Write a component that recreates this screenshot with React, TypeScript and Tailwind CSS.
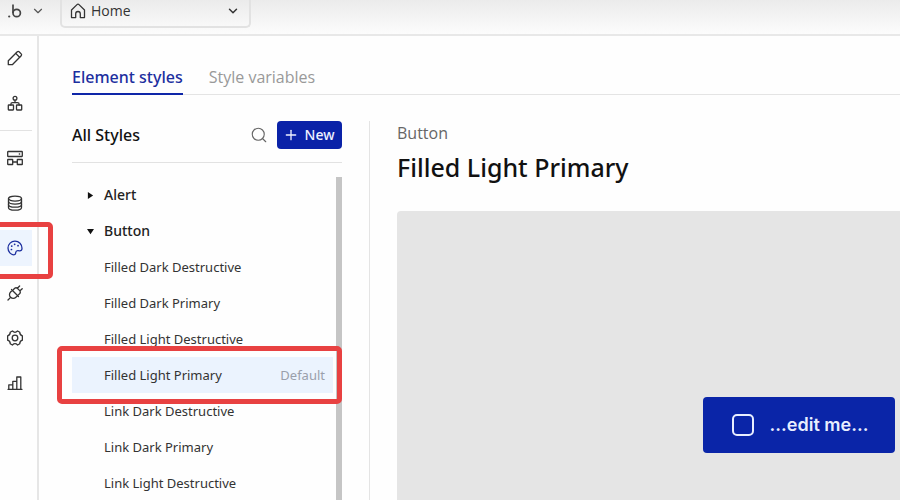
import type { ReactNode } from 'react';
import { ChevronDown, Plus, Search } from 'lucide-react';

function Icon({ children, className = '' }: { children: ReactNode; className?: string }) {
  return (
    <svg
      viewBox="0 0 16 16"
      className={`size-4 shrink-0 ${className}`}
      fill="none"
      stroke="currentColor"
      strokeWidth="1.3"
      strokeLinecap="round"
      strokeLinejoin="round"
      aria-hidden="true"
    >
      {children}
    </svg>
  );
}

type NavItem = { label: string; icon: ReactNode; active?: boolean };

const topNav: NavItem[] = [
  {
    label: 'Design',
    icon: (
      <>
        <path d="M1.3 14.7V10.7L10.3 1.8a1.3 1.3 0 0 1 1.8 0l2.1 2.1a1.3 1.3 0 0 1 0 1.8L5.3 14.7Z" />
        <path d="m8.7 3.4 3.9 3.9" />
      </>
    ),
  },
  {
    label: 'Workflow',
    icon: (
      <>
        <circle cx="8" cy="3.2" r="1.9" />
        <path d="M8 5.100v2.500M3.800 10V9.400Q3.800 7.600 5.600 7.600h4.800q1.800 0 1.800 1.800v.6" />
        <rect x="1.3" y="10" width="5.2" height="5" rx="0.5" />
        <rect x="9.5" y="10" width="5.2" height="5" rx="0.5" />
      </>
    ),
  },
];

const bottomNav: NavItem[] = [
  {
    label: 'Views',
    icon: (
      <>
        <rect x="0.7" y="1.5" width="14.6" height="5" rx="0.4" />
        <path d="M12.3 4h.4" />
        <rect x="0.7" y="9.5" width="5" height="5" rx="0.3" />
        <rect x="10.3" y="9.5" width="5" height="5" rx="0.3" />
        <path d="M5.700 12h4.600" />
      </>
    ),
  },
  {
    label: 'Data',
    icon: (
      <>
        <ellipse cx="8" cy="3.600" rx="6.500" ry="2.500" />
        <path d="M1.500 3.600v8.900c0 1.500 2.900 2.700 6.500 2.700s6.500-1.200 6.500-2.700V3.600" />
        <path d="M1.500 6.600c0 1.500 2.900 2.600 6.500 2.600s6.500-1.100 6.500-2.600M1.500 9.500c0 1.500 2.900 2.700 6.500 2.700s6.500-1.200 6.500-2.700" />
      </>
    ),
  },
  {
    label: 'Styles',
    active: true,
    icon: (
      <>
        <path d="M8 1.200a6.900 6.900 0 0 0-7 6.800c0 3.900 3 6.800 5.700 6.800 1.500 0 1.900-1 2-2.100.2-1.500 1-2.100 2.300-2l1.600.2c1.500.1 2.400-.8 2.400-2.600C15 4.400 12 1.200 8 1.200Z" />
        <path d="M7.600 4.300h.1M11 5.700h.1M4.700 6.100h.1M4.400 9.500h.1" strokeWidth="1.700" />
      </>
    ),
  },
  {
    label: 'Plugins',
    icon: (
      <>
        <path d="m4.500 4.500 7 7M5.300 5.300 3.600 7a3.700 3.700 0 0 0 0 5.300 3.700 3.700 0 0 0 5.300 0l1.700-1.700" />
        <path d="M3.600 12.400 1 15M6.300 4.700l1.400-1.400q1.500-1.100 2.900.2l2.100 2.100q1.200 1.400.1 2.900l-1.400 1.400M10.400 3.300 12.600 1M13 5.800l2.200-2.100" />
      </>
    ),
  },
  {
    label: 'Settings',
    icon: (
      <>
        <path d="M5.400 1q1.400 1.300 2.600 1.300T10.600 1l2.200 1.300q-.2 2.600 2.600 3.500v4.400q-2.800.9-2.600 3.500L10.600 15q-1.400-1.300-2.600-1.300T5.400 15l-2.200-1.300Q3.400 11.100.6 10.200V5.800Q3.400 4.900 3.200 2.300Z" />
        <circle cx="8" cy="8" r="2.800" />
      </>
    ),
  },
  {
    label: 'Logs',
    icon: (
      <>
        <path d="M1 14.300h14" />
        <path d="M1.800 14.300V9.800h4v4.500M5.800 14.300V6.300h4v8M9.800 14.300V2h4v12.300" />
      </>
    ),
  },
];

function NavButton({ item }: { item: NavItem }) {
  return (
    <button
      type="button"
      aria-label={item.label}
      className={`relative flex h-9 w-8 items-center pl-[7px] ${
        item.active ? 'bg-[#edf4fe] text-[#1c2f9f]' : 'text-[#333]'
      }`}
    >
      <Icon>{item.icon}</Icon>
      {item.active && (
        <span className="pointer-events-none absolute -top-2 -right-[21px] -bottom-[13px] -left-2 z-10 rounded-[5px] border-5 border-[#e84141]" />
      )}
    </button>
  );
}

const buttonStyles = [
  'Filled Dark Destructive',
  'Filled Dark Primary',
  'Filled Light Destructive',
  'Filled Light Primary',
  'Link Dark Destructive',
  'Link Dark Primary',
  'Link Light Destructive',
];

function StyleRow({ name, selected }: { name: string; selected: boolean }) {
  return (
    <li className={selected ? 'relative bg-[#ebf3fe]' : ''}>
      <button type="button" className="flex h-9 w-full items-center justify-between pr-2 pl-8">
        <span>{name}</span>
        {selected && <span className="text-[#9a9fab]">Default</span>}
      </button>
      {selected && (
        <span className="pointer-events-none absolute -inset-y-[11px] -right-[9px] -left-[15px] z-10 rounded-[5px] border-5 border-[#e84141]" />
      )}
    </li>
  );
}

export default function App() {
  return (
    <div className="flex h-screen flex-col overflow-hidden bg-[#fefefe] font-['Noto_Sans','Open_Sans',sans-serif] text-[#333]">
      <header className="flex h-9 shrink-0 items-start border-b-2 border-[#e8e8e8] bg-linear-to-b from-[#ebebeb] to-[#fcfcfc]">
        <button type="button" aria-label="Bubble menu" className="flex h-[22px] w-[60px] items-center gap-[9px] pl-2">
          <svg viewBox="0 0 14 14" className="size-3.5" fill="none" stroke="#444" strokeWidth="1.700" aria-hidden="true">
            <circle cx="8.700" cy="9" r="3.700" />
            <path d="M5 .5V9" />
            <circle cx="1.200" cy="12.500" r="1.100" fill="#444" stroke="none" />
          </svg>
          <ChevronDown className="size-3.5 text-[#555]" strokeWidth={2} />
        </button>
        <label className="relative flex h-7 w-[191px] items-start rounded-b-[5px] border-2 border-t-0 border-[#e2e2e2]">
          <Icon className="pointer-events-none absolute top-[3px] left-2">
            <path d="M1.500 14.600V7L7 1.600a1.400 1.400 0 0 1 2 0L14.500 7v7.600h-4.200v-3.800a2.300 2.300 0 0 0-4.600 0v3.800Z" />
          </Icon>
          <select
            aria-label="Page"
            className="h-[22px] w-full appearance-none bg-transparent pl-[29px] font-['Open_Sans','Noto_Sans',sans-serif] text-sm leading-[22px] outline-none"
          >
            <option>Home</option>
          </select>
          <ChevronDown className="pointer-events-none absolute top-1 right-[9px] size-3.5" strokeWidth={2.500} />
        </label>
      </header>

      <div className="flex min-h-0 flex-1">
        <nav aria-label="Editor" className="flex w-[39px] shrink-0 flex-col gap-[9px] border-r-2 border-[#e6e6e6] pt-1">
          {topNav.map((item) => (
            <NavButton key={item.label} item={item} />
          ))}
          <hr className="w-8 border-[#e2e2e2]" />
          {bottomNav.map((item) => (
            <NavButton key={item.label} item={item} />
          ))}
        </nav>

        <main className="flex min-w-0 flex-1 flex-col pl-[33px]">
          <div role="tablist" className="mt-6 flex h-[35px] shrink-0 gap-[26px] border-b border-[#e4e4e4] text-base">
            <button
              type="button"
              role="tab"
              aria-selected="true"
              className="-mb-px flex h-[35px] items-start border-b-2 border-[#0e26a8] pt-[5px] font-medium text-[#1c2f9f]"
            >
              Element styles
            </button>
            <button
              type="button"
              role="tab"
              aria-selected="false"
              className="flex items-start pt-[5px] font-['Open_Sans','Noto_Sans',sans-serif] text-[#999]"
            >
              Style variables
            </button>
          </div>

          <div className="flex min-h-0 flex-1 pt-[26px]">
            <section className="flex w-[270px] shrink-0 flex-col">
              <div className="flex h-[42px] shrink-0 items-start border-b border-[#e2e2e2]">
                <h2 className="flex-1 text-base leading-[28px] font-medium text-[#111]">All Styles</h2>
                <button type="button" aria-label="Search styles" className="mr-[9px] flex h-7 items-center text-[#666]">
                  <Search className="size-[18px]" strokeWidth={1.500} />
                </button>
                <button
                  type="button"
                  className="flex h-7 w-[65px] items-center justify-center gap-1.5 rounded-[4px] bg-[#0a22a8] pr-0.5 text-sm font-medium text-[#eef1ff]"
                >
                  <Plus className="size-4" strokeWidth={2} />
                  New
                </button>
              </div>

              <div className="mt-[14px] flex min-h-0 flex-1">
                <ul className="min-w-0 flex-1 text-sm">
                  <li>
                    <button type="button" className="flex h-9 w-full items-center gap-2.5 pl-[15px] font-medium text-[#222]">
                      <svg viewBox="0 0 8 8" className="w-[7px]" fill="#111" aria-hidden="true">
                        <path d="M1 0 7 4 1 8Z" />
                      </svg>
                      Alert
                    </button>
                  </li>
                  <li>
                    <button type="button" className="flex h-9 w-full items-center gap-2.5 pl-[15px] font-medium text-[#222]">
                      <svg viewBox="0 0 8 8" className="w-[7px]" fill="#111" aria-hidden="true">
                        <path d="M0 1h8L4 7Z" />
                      </svg>
                      Button
                    </button>
                    <ul className="text-[13px] leading-5">
                      {buttonStyles.map((name) => (
                        <StyleRow key={name} name={name} selected={name === 'Filled Light Primary'} />
                      ))}
                    </ul>
                  </li>
                </ul>
                <div className="ml-[3px] w-1.5 bg-[#c5c5c5]" />
              </div>
            </section>

            <section className="ml-[27px] flex min-w-0 flex-1 flex-col border-l border-[#e4e4e4] pl-[27px]">
              <p className="font-['Open_Sans','Noto_Sans',sans-serif] text-base leading-6 text-[#666]">Button</p>
              <h1 className="mt-1 text-[25px] leading-9 font-medium text-[#111]">Filled Light Primary</h1>
              <div className="mt-[26px] flex flex-1 items-start justify-end rounded-tl-[4px] bg-[#e5e5e5] pt-[186px] pr-[5px]">
                <button
                  type="button"
                  className="flex h-14 w-48 items-center justify-center gap-4 rounded-[4px] bg-[#0a25a8] pl-0.5 font-[Inter,sans-serif] text-lg font-semibold text-[#e8eeff]"
                >
                  <span className="size-[22px] rounded-[5px] border-2 border-[#e8eeff]" />
                  ...edit me...
                </button>
              </div>
            </section>
          </div>
        </main>
      </div>
    </div>
  );
}
